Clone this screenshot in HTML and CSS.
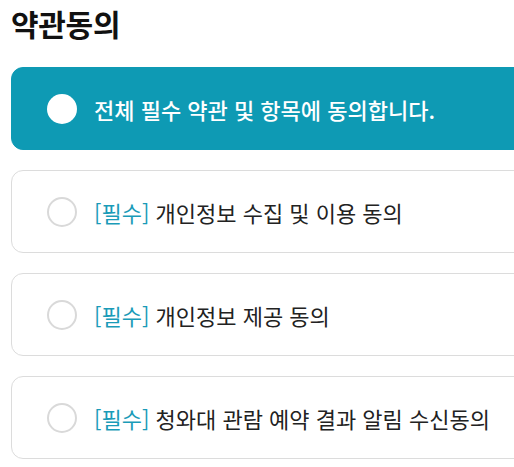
FILE: index.html
```html
<!DOCTYPE html>
<html lang="ko">
  <head>
    <meta charset="UTF-8" />
    <title>약관동의</title>
    <link rel="stylesheet" href="styles.css">
  </head>
  <body>
    <div class="container">
      <h1 class="title">약관동의</h1>
      <ul class="terms">
        <li class="term term-all">
          <span class="check"></span>
          <span class="label">전체 필수 약관 및 항목에 동의합니다.</span>
        </li>
        <li class="term">
          <span class="check"></span>
          <span class="label"><em>[필수]</em> 개인정보 수집 및 이용 동의</span>
        </li>
        <li class="term">
          <span class="check"></span>
          <span class="label"><em>[필수]</em> 개인정보 제공 동의</span>
        </li>
        <li class="term">
          <span class="check"></span>
          <span class="label"><em>[필수]</em> 청와대 관람 예약 결과 알림 수신동의</span>
        </li>
      </ul>
    </div>
  </body>
</html>
```

FILE: styles.css
```css
html,
body {
  overflow: hidden;
}
body {
  margin: 0;
  font-family: "Noto Sans CJK KR", "Noto Sans", sans-serif;
  background: #fff;
}
.container {
  width: 600px;
  padding: 3px 0 0 11px;
}
.title {
  margin: 0 0 24px 0;
  font-size: 30px;
  line-height: 40px;
  font-weight: 700;
  color: #111;
  letter-spacing: -0.3px;
}
.terms {
  list-style: none;
  margin: 0;
  padding: 0;
  display: flex;
  flex-direction: column;
  gap: 20px;
}
.term {
  display: flex;
  align-items: center;
  height: 83px;
  box-sizing: border-box;
  padding-left: 35px;
  border: 1px solid #dcdcdc;
  border-radius: 12px;
  background: #fff;
}
.term-all {
  background: #0e9ab4;
  border-color: #0e9ab4;
}
.check {
  width: 30px;
  height: 30px;
  box-sizing: border-box;
  border: 2px solid #d9d9d9;
  border-radius: 50%;
  background: #fff;
  flex-shrink: 0;
}
.term-all .check {
  border: none;
}
.label {
  margin-left: 17px;
  font-size: 22px;
  color: #222;
}
.term-all .label {
  color: #fff;
  font-weight: 500;
}
.label em {
  font-style: normal;
  color: #1a9bb8;
}
```
